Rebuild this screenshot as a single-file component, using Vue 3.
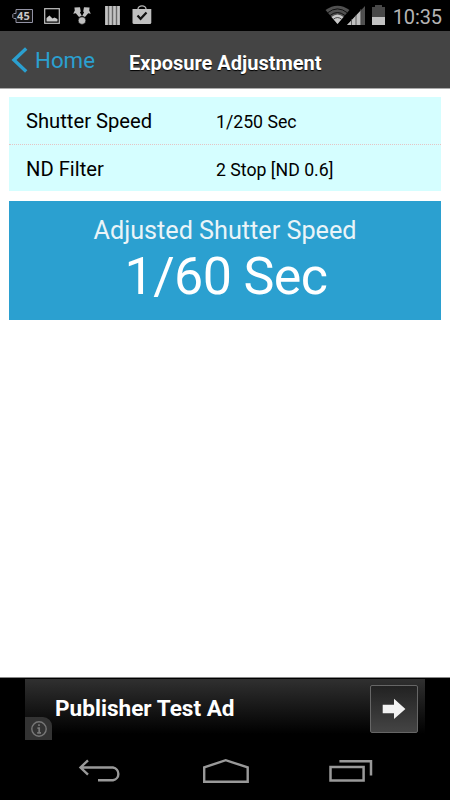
<template>
  <div class="screen">
    <header class="status-bar">
      <div class="notifications">
        <svg class="icon-battery-level" width="22" height="16" viewBox="0 0 22 16">
          <path d="M4 1.5H20.5V14.5H4V10.5H1.8L.8 9.5V6.5L1.8 5.5H4Z" fill="#111" stroke="#9292a4" />
          <text x="11.4" y="12.2" text-anchor="middle" class="level">45</text>
        </svg>
        <svg class="icon-picture" width="16" height="16" viewBox="0 0 16 16">
          <rect x=".7" y=".7" width="14.6" height="14.6" fill="none" stroke="#c4c4c4" stroke-width="1.2" />
          <path d="M2.5 13.5V10L5.5 7.5L8.5 10.5L10.5 9.5L13.5 11V13.5Z" fill="#c8c8c8" />
        </svg>
        <svg class="icon-share" width="18" height="18" viewBox="0 0 18 18">
          <path d="M1.4 .6L7 .2L7.8 4.6L6.9 5.2L8.8 8.8L6 10L2.8 6.3L.2 6.8L1.8 3.6Z" fill="#c0c0c0" />
          <path d="M16.6 .6L11 .2L10.2 4.6L11.1 5.2L9.2 8.8L12 10L15.2 6.3L17.8 6.8L16.2 3.6Z" fill="#c0c0c0" />
          <circle cx="9" cy="13.6" r="3.8" fill="#c0c0c0" stroke="#000" stroke-width=".6" />
        </svg>
        <svg class="icon-bars" width="15" height="19" viewBox="0 0 15 19">
          <rect width="15" height="19" fill="#686868" />
          <path d="M1.5 0V19M5.5 0V19M9.5 0V19M13.5 0V19" stroke="#c4c4c4" stroke-width="2.6" />
        </svg>
        <svg class="icon-bag" width="20" height="20" viewBox="0 0 20 20">
          <path d="M6 6V4A4 3.2 0 0 1 14 4V6" fill="none" stroke="#b4b4b4" stroke-width="1.3" />
          <path d="M.5 4H19.3V17.5Q19.3 19 17.8 19H2Q.5 19 .5 17.5Z" fill="#c0c0c0" />
          <path d="M5.5 10.5L8.6 13.8L14.5 7.5" fill="none" stroke="#111" stroke-width="2.2" />
        </svg>
      </div>
      <div class="system">
        <svg width="60" height="22" viewBox="0 0 60 22">
          <path d="M.5 5Q12.5 -3.5 24.5 5L12.5 19Z" fill="#505050" />
          <path d="M6.5 12Q12.5 7 18.5 12L12.5 19Z" fill="#c8c8c8" />
          <path d="M2.6 7.8Q12.5 0 22.4 7.8M4.9 10.6Q12.5 4.4 20.1 10.6" fill="none" stroke="#000" stroke-width=".8" />
          <path d="M8.3 14.3Q12.5 10.8 16.7 14.3" fill="none" stroke="#222" stroke-width=".8" />
          <path d="M22 20L40 1V20Z" fill="#505050" />
          <path d="M22 20L36 5.2V20Z" fill="#c0c0c0" />
          <path d="M26.5 14V20M31 10V20M35.8 4V20" stroke="#444" stroke-width=".8" />
          <path d="M47 2H50V0H57V2H60V20H47Z" fill="#484848" />
          <path d="M47 12H60V20H47Z" fill="#c2c2c2" />
        </svg>
        <span class="clock">10:35</span>
      </div>
    </header>

    <nav class="title-bar">
      <button class="back">
        <svg width="17" height="26" viewBox="0 0 17 26">
          <path d="M15.2 1.6L3 13L15.2 24.4" fill="none" stroke="#2ba0d0" stroke-width="3.4" />
        </svg>
        <span>Home</span>
      </button>
      <h1>Exposure Adjustment</h1>
    </nav>

    <main class="content">
      <dl class="settings">
        <div v-for="item in settings" :key="item.label" class="setting">
          <dt>{{ item.label }}</dt>
          <dd>{{ item.value }}</dd>
        </div>
      </dl>
      <section class="result">
        <h2>Adjusted Shutter Speed</h2>
        <p>{{ adjustedSpeed }}</p>
      </section>
    </main>

    <footer class="ad-area">
      <div class="ad">
        <div class="info">
          <svg width="18" height="18" viewBox="0 0 18 18" fill="none" stroke="#777">
            <circle cx="9" cy="9" r="7.2" stroke-width="1.4" />
            <path d="M9 4.2V6M7.4 8.2H9.2V13M7.2 12.8H11" stroke-width="1.7" />
          </svg>
        </div>
        <span class="ad-text">Publisher Test Ad</span>
        <button class="ad-action">
          <svg width="24" height="22" viewBox="0 0 24 22">
            <path d="M.7 6.7H12V.8L23.4 11L12 21V15.3H.7Z" fill="#f2f2f2" />
          </svg>
        </button>
      </div>
    </footer>

    <div class="nav-keys">
      <svg width="44" height="24" viewBox="0 0 44 24">
        <path d="M2.5 8.5H35A6.5 6.5 0 0 1 35 21.3H20M10 1.3L2.5 8.5L10 15.7" fill="none" stroke="#999" stroke-width="2.4" />
      </svg>
      <svg width="48" height="26" viewBox="0 0 48 26">
        <path d="M2.2 23.7V9.4L23.7 2.2L45.7 9.4V23.7Z" fill="none" stroke="#999" stroke-width="2.4" />
      </svg>
      <svg width="44" height="24" viewBox="0 0 44 24">
        <path d="M1.5 8.1H34.6V21.5H1.5ZM10.4 2.3H42V16.5" fill="none" stroke="#999" stroke-width="2.5" />
      </svg>
    </div>
  </div>
</template>

<script setup>
import { ref } from 'vue'

const settings = ref([
  { label: 'Shutter Speed', value: '1/250 Sec' },
  { label: 'ND Filter', value: '2 Stop [ND 0.6]' },
])

const adjustedSpeed = ref('1/60 Sec')
</script>

<style>
body {
  background: #fff;
}
</style>

<style scoped>
.screen {
  display: flex;
  flex-direction: column;
  width: 450px;
  height: 800px;
  overflow: hidden;
  background: #fff;
  font-family: Roboto, sans-serif;
  color: #000;
}

svg {
  display: block;
  flex: none;
}

button {
  border: 0;
  padding: 0;
  background: none;
  font-family: inherit;
}

.status-bar {
  display: flex;
  justify-content: space-between;
  height: 31px;
  padding: 0 8px 0 12px;
  background: #000;
  box-sizing: border-box;
}

.notifications {
  display: flex;
  align-items: flex-start;
}

.level {
  font: bold 11px 'Open Sans', sans-serif;
  fill: #c8c8c8;
}

.icon-battery-level {
  margin-top: 8px;
}

.icon-picture {
  margin: 8px 0 0 10px;
}

.icon-share {
  margin: 7px 0 0 13px;
}

.icon-bars {
  margin: 6px 0 0 14px;
}

.icon-bag {
  margin: 5px 0 0 12px;
}

.system {
  display: flex;
  align-items: flex-start;
  gap: 8px;
  padding-top: 5px;
}

.clock {
  font-size: 20px;
  line-height: 24px;
  letter-spacing: -0.1px;
  color: #b4b4b4;
}

.title-bar {
  display: flex;
  align-items: center;
  height: 58px;
  padding-left: 11px;
  background: #444;
  border-bottom: 1px solid #aaa;
  box-sizing: border-box;
}

.back {
  display: flex;
  align-items: center;
  gap: 7px;
  width: 118px;
  color: #2ba0d0;
  font-size: 22.3px;
  line-height: 26px;
}

.back span {
  padding-top: 1px;
}

h1 {
  margin: 7px 0 0;
  font-size: 20px;
  line-height: 24px;
  font-weight: bold;
  color: #fff;
  text-shadow: 0 1px 1px #000;
}

.content {
  flex: 1;
  padding: 8px 9px 0;
}

.settings {
  margin: 0;
  height: 94px;
  background: #d5feff;
}

.setting {
  display: grid;
  grid-template-columns: 190px 1fr;
  align-items: center;
  height: 47px;
  padding-left: 17px;
  box-sizing: border-box;
}

.setting + .setting {
  border-top: 1px dotted #e5c4c4;
}

dt {
  margin-top: 1px;
  font-size: 20.2px;
}

dd {
  margin: 3px 0 0;
  font-size: 17.7px;
}

.result {
  margin-top: 10px;
  height: 119px;
  padding-top: 14px;
  background: #2ba0d0;
  box-sizing: border-box;
  text-align: center;
}

h2 {
  margin: 0;
  font-size: 25.2px;
  line-height: 32px;
  font-weight: normal;
  color: #eaf4f8;
}

.result p {
  margin: 0;
  padding-left: 2px;
  font-size: 52px;
  line-height: 59px;
  letter-spacing: -0.6px;
  color: #fff;
}

.ad-area {
  height: 63px;
  padding: 1px 25px 0;
  background: #000;
  border-top: 1px solid #888;
  box-sizing: border-box;
}

.ad {
  display: flex;
  height: 61px;
  background: linear-gradient(#303030 0, #000 55px);
}

.info {
  display: flex;
  align-items: center;
  justify-content: center;
  align-self: flex-end;
  width: 27px;
  height: 23px;
  border-radius: 0 9px 0 0;
  background: #333;
}

.ad-text {
  margin: 17px 0 0 3px;
  font-size: 22.6px;
  line-height: 26px;
  font-weight: bold;
  color: #fff;
}

.ad-action {
  display: flex;
  align-items: center;
  justify-content: center;
  width: 48px;
  height: 48px;
  margin: 6px 7px 0 auto;
  border: 1px solid #666;
  border-radius: 2px;
  background: linear-gradient(#222, #444);
}

.nav-keys {
  display: flex;
  justify-content: space-between;
  align-items: center;
  height: 60px;
  padding: 2px 77px 0 78px;
  background: #000;
  box-sizing: border-box;
}
</style>
